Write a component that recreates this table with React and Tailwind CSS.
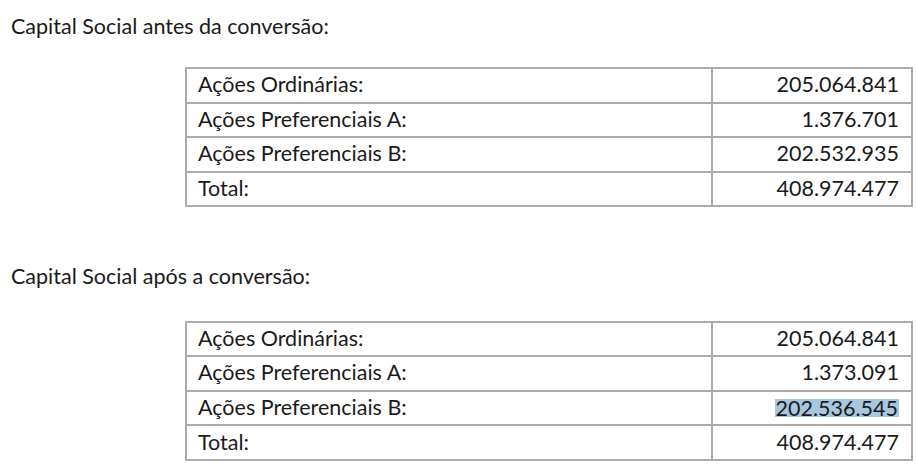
export default function App() {
  const t1 = [
    ["Ações Ordinárias:", "205.064.841"],
    ["Ações Preferenciais A:", "1.376.701"],
    ["Ações Preferenciais B:", "202.532.935"],
    ["Total:", "408.974.477"],
  ];
  const t2 = [
    ["Ações Ordinárias:", "205.064.841"],
    ["Ações Preferenciais A:", "1.373.091"],
    ["Ações Preferenciais B:", "202.536.545", true],
    ["Total:", "408.974.477"],
  ];
  const Table = ({ rows }) => (
    <div className="ml-[185px] w-[728px] border-2 border-[#ababab] bg-white divide-y-2 divide-[#ababab]">
      {rows.map(([label, value, hl], i) => (
        <div key={i} className="grid grid-cols-[526px_1fr] h-[34.6px] last:h-[32.6px]">
          <div className="pl-[11px] pb-[1px] flex items-center border-r-2 border-[#ababab]">{label}</div>
          <div className="pr-[12px] pb-[1px] flex items-center justify-end">
            <span className={hl ? "bg-[#a9c6e0] inline-block leading-[18px] px-[1px]" : ""}>{value}</span>
          </div>
        </div>
      ))}
    </div>
  );
  return (
    <div
      className="w-[917px] h-[468px] bg-white text-[#1a1a1a] text-[21.5px] leading-none overflow-hidden"
      style={{ fontFamily: "Lato, 'Noto Sans', sans-serif" }}
    >
      <div className="pt-[16px] pl-[11px] h-[67px]">Capital Social antes da conversão:</div>
      <Table rows={t1} />
      <div className="pt-[59px] pl-[11px] h-[113.3px]">Capital Social após a conversão:</div>
      <Table rows={t2} />
    </div>
  );
}
